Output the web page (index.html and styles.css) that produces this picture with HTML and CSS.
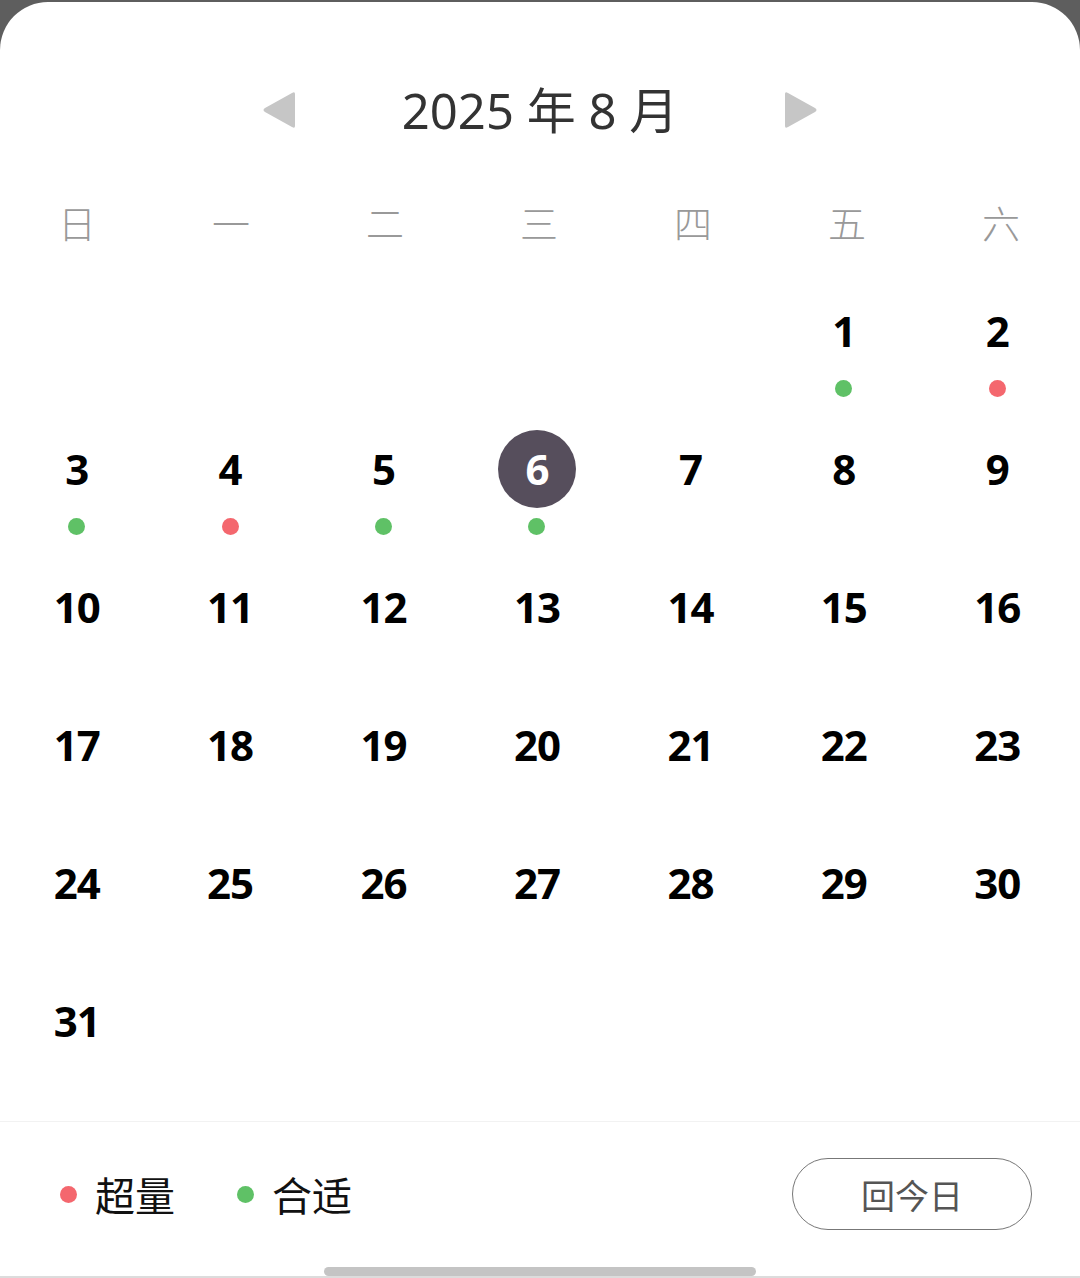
FILE: index.html
```html
<!DOCTYPE html>
<html lang="zh-CN">
<head>
<meta charset="utf-8">
<title>日历</title>
<link rel="stylesheet" href="styles.css">
</head>
<body>
<div class="sheet">
  <header class="head">
    <button class="nav" aria-label="上个月">
      <svg width="36" height="38" viewBox="0 0 36 38"><path d="M33 3 L33 35 Q33 38 30 36 L3 21 Q0 19 3 17 L30 2 Q33 0 33 3 Z" fill="#c6c6c6"/></svg>
    </button>
    <div class="title">2025 年 8 月</div>
    <button class="nav" aria-label="下个月">
      <svg width="36" height="38" viewBox="0 0 36 38"><path d="M3 3 L3 35 Q3 38 6 36 L33 21 Q36 19 33 17 L6 2 Q3 0 3 3 Z" fill="#c6c6c6"/></svg>
    </button>
  </header>

  <div class="weekdays">
    <span>日</span><span>一</span><span>二</span><span>三</span><span>四</span><span>五</span><span>六</span>
  </div>

  <div class="grid">
    <div class="cell"></div><div class="cell"></div><div class="cell"></div><div class="cell"></div><div class="cell"></div>
    <div class="cell"><span class="num">1</span><i class="dot ok"></i></div>
    <div class="cell"><span class="num">2</span><i class="dot over"></i></div>

    <div class="cell"><span class="num">3</span><i class="dot ok"></i></div>
    <div class="cell"><span class="num">4</span><i class="dot over"></i></div>
    <div class="cell"><span class="num">5</span><i class="dot ok"></i></div>
    <div class="cell"><span class="num sel">6</span><i class="dot ok"></i></div>
    <div class="cell"><span class="num">7</span></div>
    <div class="cell"><span class="num">8</span></div>
    <div class="cell"><span class="num">9</span></div>

    <div class="cell"><span class="num">10</span></div>
    <div class="cell"><span class="num">11</span></div>
    <div class="cell"><span class="num">12</span></div>
    <div class="cell"><span class="num">13</span></div>
    <div class="cell"><span class="num">14</span></div>
    <div class="cell"><span class="num">15</span></div>
    <div class="cell"><span class="num">16</span></div>

    <div class="cell"><span class="num">17</span></div>
    <div class="cell"><span class="num">18</span></div>
    <div class="cell"><span class="num">19</span></div>
    <div class="cell"><span class="num">20</span></div>
    <div class="cell"><span class="num">21</span></div>
    <div class="cell"><span class="num">22</span></div>
    <div class="cell"><span class="num">23</span></div>

    <div class="cell"><span class="num">24</span></div>
    <div class="cell"><span class="num">25</span></div>
    <div class="cell"><span class="num">26</span></div>
    <div class="cell"><span class="num">27</span></div>
    <div class="cell"><span class="num">28</span></div>
    <div class="cell"><span class="num">29</span></div>
    <div class="cell"><span class="num">30</span></div>

    <div class="cell"><span class="num">31</span></div>
  </div>

  <footer class="foot">
    <div class="legend">
      <span class="item"><i class="ldot over"></i>超量</span>
      <span class="item"><i class="ldot ok"></i>合适</span>
    </div>
    <button class="today">回今日</button>
  </footer>
  <div class="homebar"></div>
</div>
</body>
</html>
```

FILE: styles.css
```css
* { box-sizing: border-box; }
html, body { margin: 0; padding: 0; }
body {
  background: #5e5e5e;
  width: 1080px;
  height: 1278px;
  overflow: hidden;
  font-family: "Noto Sans", "Noto Sans CJK SC", sans-serif;
}
.sheet {
  margin-top: 2px;
  height: 1276px;
  background: #fff;
  border-radius: 48px 48px 0 0;
  border-bottom: 2px solid #dcdcdc;
  display: flex;
  flex-direction: column;
}
.head {
  display: flex;
  align-items: center;
  justify-content: center;
  padding-top: 78px;
  height: 138px;
}
.nav {
  border: 0;
  background: none;
  padding: 0;
  width: 36px;
  height: 38px;
  display: flex;
}
.title {
  width: 484px;
  text-align: center;
  font-size: 49px;
  line-height: 60px;
  color: #333;
  font-family: "Noto Sans", "Noto Sans CJK SC", sans-serif;
}
.weekdays {
  display: grid;
  grid-template-columns: repeat(7, 154px);
  margin-top: 52px;
  height: 71px;
}
.weekdays span {
  text-align: center;
  font-family: "Noto Sans CJK SC", sans-serif;
  font-weight: 300;
  font-size: 38px;
  line-height: 60px;
  color: #999;
}
.grid {
  display: grid;
  width: 1074px;
  grid-template-columns: repeat(7, 1fr);
  grid-auto-rows: 138px;
}
.cell {
  display: flex;
  flex-direction: column;
  align-items: center;
  padding-top: 30px;
}
.num {
  width: 78px;
  height: 78px;
  line-height: 78px;
  text-align: center;
  border-radius: 50%;
  font-family: "Noto Sans", sans-serif;
  font-weight: 700;
  font-size: 42px;
  color: #000;
  letter-spacing: -1px;
}
.num.sel {
  background: #564e5c;
  color: #fff;
}
.dot {
  width: 17px;
  height: 17px;
  border-radius: 50%;
  margin-top: 10px;
}
.ok { background: #5fc166; }
.over { background: #f4676e; }
.foot {
  margin-top: 31px;
  border-top: 1px solid #f2f2f2;
  padding: 36px 48px 0 60px;
  display: flex;
  align-items: center;
  justify-content: space-between;
}
.legend {
  display: flex;
  align-items: center;
  gap: 62px;
}
.item {
  display: flex;
  align-items: center;
  font-family: "Noto Sans CJK SC", sans-serif;
  font-size: 40px;
  color: #111;
  line-height: 50px;
}
.ldot {
  width: 17px;
  height: 17px;
  border-radius: 50%;
  margin-right: 18px;
}
.today {
  width: 240px;
  height: 72px;
  border: 1.5px solid #777;
  border-radius: 36px;
  background: #fff;
  font-family: "Noto Sans CJK SC", sans-serif;
  font-size: 34px;
  color: #555;
  padding: 0;
}
.homebar {
  align-self: center;
  margin-top: 37px;
  width: 432px;
  height: 9px;
  border-radius: 5px;
  background: #c4c4c4;
}
```
